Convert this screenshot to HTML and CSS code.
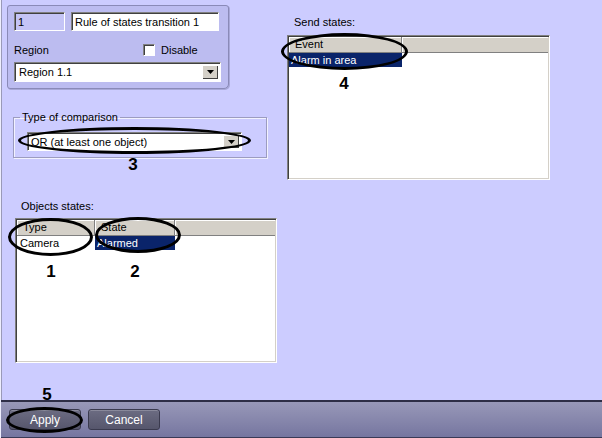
FILE: index.html
```html
<!DOCTYPE html>
<html lang="en">
<head>
    <meta charset="UTF-8">
    <title>Rule of states transition</title>
    <link rel="stylesheet" href="styles.css">
</head>
<body>

<div class="window">
    <div class="main">
        <div class="left">
            <div class="panel">
                <div class="row">
                    <div class="field field-id">1</div>
                    <div class="field field-name">Rule of states transition 1</div>
                </div>
                <div class="row row-labels">
                    <span class="region-label">Region</span>
                    <span class="check"><span class="box"></span>Disable</span>
                </div>
                <div class="combo combo-region">
                    <span class="combo-text">Region 1.1</span>
                    <span class="drop"><svg width="7" height="4" viewBox="0 0 7 4"><path d="M0 0h7L3.5 4z" fill="#000"/></svg></span>
                </div>
            </div>

            <fieldset class="group">
                <legend>Type of comparison</legend>
                <div class="combo combo-compare">
                    <span class="combo-text">OR (at least one object)</span>
                    <span class="drop"><svg width="7" height="4" viewBox="0 0 7 4"><path d="M0 0h7L3.5 4z" fill="#000"/></svg></span>
                </div>
            </fieldset>

            <div class="caption caption-objects">Objects states:</div>
            <div class="list list-objects">
                <div class="list-head">
                    <span class="col col-type">Type</span>
                    <span class="col col-state">State</span>
                    <span class="col col-rest"></span>
                </div>
                <div class="list-row">
                    <span class="cell col-type">Camera</span>
                    <span class="cell col-state selected">Alarmed</span>
                </div>
            </div>
        </div>

        <div class="right">
            <div class="caption caption-send">Send states:</div>
            <div class="list list-send">
                <div class="list-head">
                    <span class="col col-event">Event</span>
                    <span class="col col-rest"></span>
                </div>
                <div class="list-row">
                    <span class="cell col-event selected">Alarm in area</span>
                </div>
            </div>
        </div>
    </div>

    <div class="footer">
        <button class="btn">Apply</button>
        <button class="btn">Cancel</button>
    </div>

    <!-- annotation marks drawn over the dialog -->
    <span class="ring ring-1"></span>
    <span class="ring ring-2"></span>
    <span class="ring ring-3"></span>
    <span class="ring ring-4"></span>
    <span class="ring ring-5"></span>
    <span class="num num-1">1</span>
    <span class="num num-2">2</span>
    <span class="num num-3">3</span>
    <span class="num num-4">4</span>
    <span class="num num-5">5</span>
</div>

</body>
</html>
```

FILE: styles.css
```css
body {
    margin: 0;
    font-family: 'Liberation Sans', Arial, sans-serif;
    font-size: 11px;
    color: #000;
    overflow: hidden;
}
.window {
    position: relative;
    width: 601px;
    height: 438px;
    border-left: 1px solid #eeeefe;
    background: #ccccff;
}
.main {
    display: flex;
    height: 400px;
    border-left: 1px solid #9a9ab8;
}
.left {
    width: 285px;
    display: flex;
    flex-direction: column;
    align-items: flex-start;
}
.right {
    flex: 1;
    display: flex;
    flex-direction: column;
    align-items: flex-start;
}
.panel {
    margin: 5px 0 0 5px;
    width: 207px;
    padding: 6px 7px 6px 6px;
    background: #bcbcf0;
    border: 1px solid #8a8ab8;
    border-radius: 3px 3px 5px 3px;
    box-shadow: 1px 1px 0 #a8a8d8;
}
.row {
    display: flex;
    align-items: center;
    gap: 6px;
}
.row-labels {
    margin-top: 12px;
    height: 13px;
    gap: 0;
}
.region-label {
    width: 129px;
}
.check {
    display: flex;
    align-items: center;
    gap: 6px;
}
.box {
    width: 10px;
    height: 10px;
    background: #fff;
    border: 1px solid;
    border-color: #808080 #fff #fff #808080;
    box-shadow: inset 1px 1px 0 #404040;
}
.field, .combo {
    box-sizing: border-box;
    display: flex;
    align-items: center;
    background: #fff;
    border: 1px solid;
    border-color: #808080 #fff #fff #808080;
    box-shadow: inset 1px 1px 0 #404040;
    padding: 0 3px;
    white-space: nowrap;
}
.field {
    height: 19px;
}
.field-id {
    width: 51px;
    background: #c4c4f6;
}
.field-name {
    width: 148px;
}
.combo {
    justify-content: space-between;
    padding: 2px 2px 2px 4px;
}
.combo-region {
    margin-top: 6px;
    width: 207px;
    height: 20px;
}
.drop {
    width: 16px;
    height: 100%;
    display: flex;
    align-items: center;
    justify-content: center;
    background: #d4d0c8;
    box-shadow: inset 1px 1px 0 #fff, inset -1px -1px 0 #404040;
}
.group {
    margin: 22px 0 0 11px;
    width: 240px;
    padding: 0 6px 6px 6px;
    border: 1px solid #9c9cc0;
    box-shadow: 1px 1px 0 #f2f2ff, inset 1px 1px 0 #f2f2ff;
}
.group legend {
    padding: 0 2px;
    line-height: 12px;
}
.combo-compare {
    margin: 9px 0 0 7px;
    width: 215px;
    height: 19px;
    padding-left: 3px;
}
.caption {
    line-height: 13px;
}
.caption-objects {
    margin: 42px 0 5px 19px;
}
.caption-send {
    margin: 16px 0 6px 7px;
}
.list {
    box-sizing: border-box;
    height: 145px;
    background: #fff;
    border: 1px solid;
    border-color: #808080 #fff #fff #808080;
    box-shadow: inset 1px 1px 0 #404040, inset -1px -1px 0 #d4d0c8;
    padding: 1px;
}
.list-objects {
    margin-left: 13px;
    width: 262px;
}
.list-send {
    width: 263px;
}
.list-head {
    display: flex;
    height: 16px;
}
.col {
    box-sizing: border-box;
    height: 16px;
    line-height: 15px;
    background: #d4d0c8;
    border-right: 1px solid #808080;
    border-bottom: 1px solid #808080;
    box-shadow: inset 1px 1px 0 #fff;
    padding-left: 6px;
}
.col-rest {
    flex: 1;
    border-right: none;
}
.col-type {
    width: 78px;
}
.col-state {
    width: 80px;
}
.col-event {
    width: 113px;
}
.list-row {
    display: flex;
    height: 14px;
    line-height: 14px;
}
.cell {
    box-sizing: border-box;
    padding-left: 3px;
}
.list-objects .col-state.cell {
    padding-left: 2px;
}
.list-send .cell {
    padding-left: 2px;
}
.selected {
    background: #0a246a;
    color: #fff;
}
.footer {
    box-sizing: border-box;
    height: 38px;
    display: flex;
    gap: 7px;
    padding: 7px 0 0 8px;
    background: linear-gradient(to bottom, #9898b8, #7676a0);
    border-top: 2px solid #2e2e46;
    border-bottom: 1px solid #3a3a56;
}
.btn {
    width: 72px;
    height: 21px;
    font-family: 'Liberation Sans', Arial, sans-serif;
    font-size: 12px;
    color: #fff;
    background: linear-gradient(to bottom, #6c6c82, #56566c);
    border: 1px solid #3a3a4e;
    border-radius: 3px;
    box-shadow: inset 0 1px 0 rgba(255, 255, 255, 0.2);
    padding: 0;
}
.ring {
    position: absolute;
    box-sizing: border-box;
    border: 3px solid #000;
    border-radius: 50%;
}
.ring-1 { left: 7px; top: 218px; width: 85px; height: 38px; }
.ring-2 { left: 94px; top: 217px; width: 86px; height: 36px; }
.ring-3 { left: 17px; top: 127px; width: 233px; height: 27px; }
.ring-4 { left: 280px; top: 33px; width: 127px; height: 37px; }
.ring-5 { left: 5px; top: 407px; width: 77px; height: 26px; }
.num {
    position: absolute;
    font-size: 17px;
    font-weight: bold;
    line-height: 17px;
    width: 20px;
    margin-left: -10px;
    text-align: center;
}
.num-1 { left: 50px; top: 263px; }
.num-2 { left: 134px; top: 263px; }
.num-3 { left: 132px; top: 156px; }
.num-4 { left: 343px; top: 75px; }
.num-5 { left: 46px; top: 386px; }
```
